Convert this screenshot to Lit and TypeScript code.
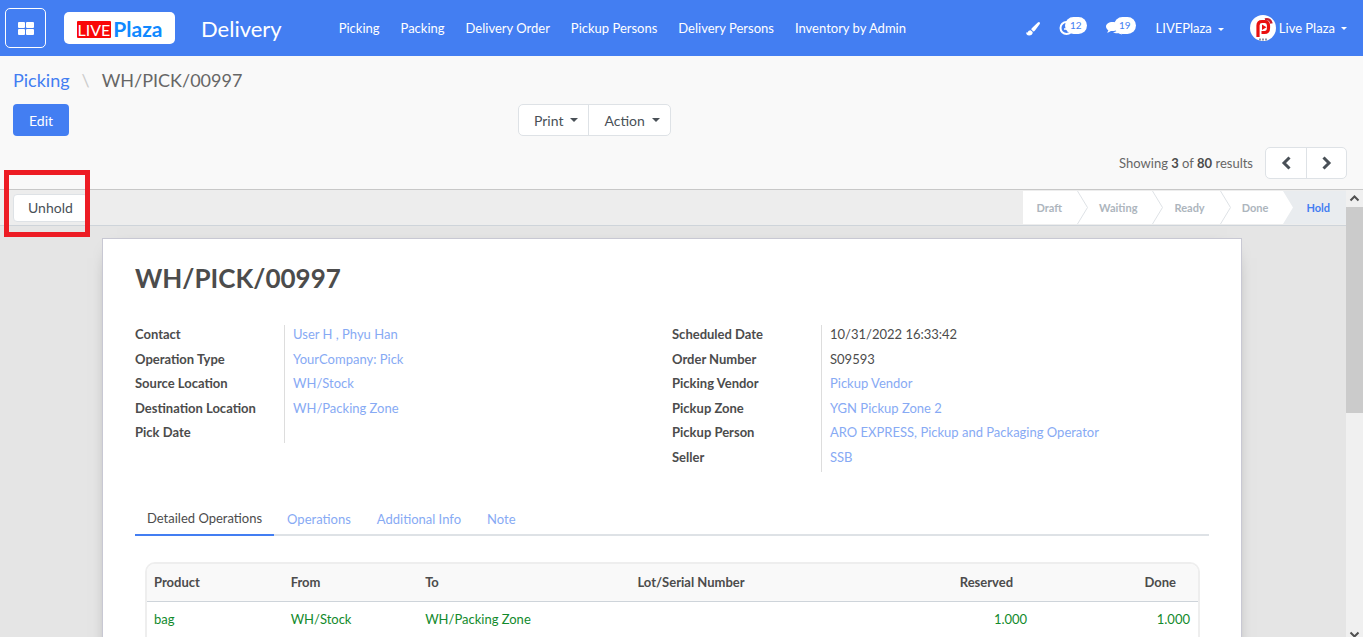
import { LitElement, html, css, svg, nothing } from "lit";
import { customElement } from "lit/decorators.js";
import { classMap } from "lit/directives/class-map.js";

interface Field {
  label: string;
  value: string;
  link?: boolean;
}

const MENU = ["Picking", "Packing", "Delivery Order", "Pickup Persons", "Delivery Persons", "Inventory by Admin"];
const STAGES = ["Draft", "Waiting", "Ready", "Done", "Hold"];
const TABS = ["Detailed Operations", "Operations", "Additional Info", "Note"];

const LEFT: Field[] = [
  { label: "Contact", value: "User H , Phyu Han", link: true },
  { label: "Operation Type", value: "YourCompany: Pick", link: true },
  { label: "Source Location", value: "WH/Stock", link: true },
  { label: "Destination Location", value: "WH/Packing Zone", link: true },
  { label: "Pick Date", value: "" },
];

const RIGHT: Field[] = [
  { label: "Scheduled Date", value: "10/31/2022 16:33:42" },
  { label: "Order Number", value: "S09593" },
  { label: "Picking Vendor", value: "Pickup Vendor", link: true },
  { label: "Pickup Zone", value: "YGN Pickup Zone 2", link: true },
  { label: "Pickup Person", value: "ARO EXPRESS, Pickup and Packaging Operator", link: true },
  { label: "Seller", value: "SSB", link: true },
];

const caret = html`<svg class="caret" viewBox="0 0 8 4" aria-hidden="true"><path d="M0 0h8L4 4z" fill="currentColor" /></svg>`;

@customElement("app-root")
export class AppRoot extends LitElement {
  static styles = css`
    :host {
      display: flex;
      flex-direction: column;
      height: 100vh;
      overflow: hidden;
      background: #f9f9f9;
      color: #4c4c4c;
      font-family: Lato, "Liberation Sans", sans-serif;
      font-size: 13px;
      line-height: 1.5;
    }
    * { box-sizing: border-box; }
    a { color: inherit; text-decoration: none; }
    button { font: inherit; color: inherit; background: none; border: 0; padding: 0; cursor: pointer; }
    svg { display: block; }
    .caret { display: inline-block; width: 8px; height: 4px; vertical-align: middle; }

    .navbar {
      flex: none;
      display: flex;
      align-items: center;
      height: 56px;
      padding: 0 16px 0 5px;
      background: #437ef2;
      color: #fff;
    }
    .apps {
      display: grid;
      place-items: center;
      width: 41px;
      height: 40px;
      border: 1px solid #fff;
      border-radius: 5px;
    }
    .apps svg { width: 16px; height: 14px; }
    .logo {
      display: flex;
      align-items: center;
      justify-content: center;
      gap: 2px;
      width: 111px;
      height: 32px;
      margin-left: 18px;
      padding-top: 2px;
      background: #fff;
      border-radius: 5px;
    }
    .live { padding: 0 1px; background: #f90808; color: #fff; font-size: 16px; line-height: 17px; border-radius: 1px; }
    .plaza { color: #1089ff; font-size: 21px; line-height: 20px; font-weight: 700; }
    .brand { margin-left: 26px; font-size: 22px; }
    .menu { display: flex; gap: 21px; margin-left: 57px; padding-top: 2px; }
    .systray { display: flex; align-items: center; margin-left: auto; }
    .brush { width: 14px; height: 14px; margin-top: 1px; }
    .tray { display: flex; align-items: center; position: relative; width: 28px; height: 20px; }
    .activity { margin-left: 19px; }
    .messages { width: 30px; margin-left: 19px; }
    .count {
      position: absolute;
      right: 0;
      top: -1px;
      padding: 0 5px;
      border-radius: 9px;
      background: #fff;
      color: #437ef2;
      font-size: 10px;
      line-height: 17px;
    }
    .drop { display: flex; align-items: center; gap: 6px; padding-top: 2px; }
    .drop .caret { width: 6px; height: 3px; }
    .company { margin-left: 20px; }
    .user { margin-left: 26px; padding-top: 0; }
    .name { padding-top: 2px; }
    .avatar { width: 26px; height: 26px; margin-right: -3px; }

    .panel { flex: none; padding: 11px 16px 10px 13px; border-bottom: 1px solid #c8c8c8; }
    .crumbs { display: flex; gap: 12px; font-size: 18px; line-height: 26px; color: #666; }
    .crumbs a { color: #437ef2; }
    .slash { color: #ccc; }
    .actions { display: grid; grid-template-columns: 505px 1fr; align-items: center; margin-top: 11px; }
    .edit { justify-self: start; height: 32px; padding: 0 16px; border-radius: 4px; background: #437ef2; color: #fff; font-size: 14px; }
    .group { display: flex; justify-self: start; border: 1px solid #dee2e6; border-radius: 5px; background: #fff; color: #495057; }
    .group button { display: flex; align-items: center; justify-content: center; gap: 7px; height: 30px; }
    .group button + button { border-left: 1px solid #dee2e6; }
    .menus button { padding: 0 10px 0 15px; font-size: 14px; }
    .pager { display: flex; align-items: center; justify-content: flex-end; gap: 12px; margin-top: 11px; color: #666; }
    .pager span { padding-top: 2px; }
    .pager b { color: #4c4c4c; }
    .pager button { width: 40px; }
    .pager button svg { width: 12px; height: 14px; }

    .body { flex: 1; min-height: 0; display: flex; }
    .form { flex: 1; min-width: 0; background: #e5e5e5; }
    .statusbar {
      display: flex;
      align-items: center;
      justify-content: space-between;
      height: 36px;
      padding-left: 13px;
      background: #ededed;
      border-bottom: 1px solid #ced4da;
    }
    .hold { position: relative; }
    .unhold { display: block; height: 28px; padding: 0 14px; border: 1px solid #dee2e6; border-radius: 4px; background: #fff; color: #495057; font-size: 14px; }
    .marker { position: absolute; inset: -24px -2px -15px -9px; border: 5px solid #ed1c24; pointer-events: none; }
    .stages { display: flex; height: 33px; margin: 0; padding: 0; list-style: none; background: #fff; font-size: 11px; font-weight: 700; color: #adb5bd; }
    .stage { display: flex; align-items: center; padding-left: 14px; }
    .stage span { padding-top: 2px; }
    .stage svg { width: 11px; height: 33px; margin-left: 15px; }
    .stage + .stage { padding-left: 11px; }
    .stage.current { padding: 0 16px 0 12px; background: #e9ecef; color: #437ef2; }

    .canvas { padding: 12px 2px 0 0; }
    .sheet {
      max-width: 1140px;
      min-height: 900px;
      margin: 0 auto;
      padding: 21px 32px;
      background: #fff;
      border: 1px solid #c8c8d3;
      box-shadow: 0 5px 20px -15px #000;
    }
    h1 { margin: 0; font-size: 26px; line-height: 36px; font-weight: 700; }
    .columns { display: grid; grid-template-columns: 1fr 1fr; margin-top: 29px; }
    .fields { display: grid; grid-template-columns: 149px 1fr; align-content: start; margin: 0; }
    dt { font-weight: 700; padding-bottom: 5px; }
    dd { margin: 0; padding: 0 0 5px 8px; border-left: 1px solid #ddd; }
    dd.empty { height: 20px; }
    .link { color: #87aaf4; }
    .tabs { display: flex; margin-top: 32px; border-bottom: 2px solid #dee2e6; }
    .tab { height: 32px; margin-bottom: -2px; padding: 1px 13px 0; color: #87aaf4; border-bottom: 2px solid transparent; }
    .tab.active { padding: 0 12px; color: #4c4c4c; border-bottom-color: #437ef2; }
    .list { margin: 26px 9px 0 10px; border: 2px solid #eee; border-radius: 10px 10px 0 0; overflow: hidden; }
    table { width: 100%; border-collapse: collapse; table-layout: fixed; }
    .c1 { width: 13%; }
    .c2 { width: 12.8%; }
    .c3 { width: 20.2%; }
    .c4 { width: 24%; }
    .c6 { width: 15.5%; }
    th { height: 37px; padding: 0 8px 0 7px; background: #f9f9f9; border-bottom: 1px solid #ced4da; text-align: left; }
    td { height: 36px; padding: 1px 8px 0 7px; border-bottom: 1px solid #eee; color: #128a2c; }
    .num { text-align: right; }
    th.num { padding-right: 22px; }

    .scrollbar { flex: none; display: flex; flex-direction: column; align-items: center; width: 17px; margin-bottom: -6px; background: #f0f0f0; }
    .scrollbar svg { width: 17px; height: 17px; }
    .thumb { width: 17px; height: 206px; margin-bottom: auto; background: #cbcbcb; }
  `;

  private fields(list: Field[]) {
    return html`<dl class="fields">
      ${list.map(
        (f) => html`<dt>${f.label}</dt>
          <dd class=${classMap({ empty: !f.value })}>${f.link ? html`<a class="link" href="#">${f.value}</a>` : f.value}</dd>`
      )}
    </dl>`;
  }

  private stage(name: string, i: number) {
    const beforeLast = i === STAGES.length - 2;
    const last = i === STAGES.length - 1;
    const edge = beforeLast
      ? svg`<path d="M0 0L10 16.500L0 33H11V0z" fill="#e9ecef"/>`
      : svg`<path d="M.5 0L10.500 16.500L.5 33" fill="none" stroke="#dee2e6"/>`;
    return html`<li class=${classMap({ stage: true, current: last })}>
      <span>${name}</span>${last ? nothing : html`<svg viewBox="0 0 11 33" aria-hidden="true">${edge}</svg>`}
    </li>`;
  }

  render() {
    return html`
      <header class="navbar">
        <button class="apps" aria-label="Applications">
          <svg viewBox="0 0 16 14" fill="#fff"><rect y="1" width="7" height="6" rx="1" /><rect x="8" y="1" width="8" height="6" rx="1" /><rect y="8" width="7" height="6" rx="1" /><rect x="8" y="8" width="8" height="6" rx="1" /></svg>
        </button>
        <a class="logo" href="#"><span class="live">LIVE</span><span class="plaza">Plaza</span></a>
        <a class="brand" href="#">Delivery</a>
        <nav class="menu">${MENU.map((m) => html`<a href="#">${m}</a>`)}</nav>
        <div class="systray">
          <button aria-label="Theme">
            <svg class="brush" viewBox="0 0 14 14" fill="#fff"><path d="M13.600.4c.6.500.4 1.200 0 1.800L9 8.600c-.5.6-1 .9-1.600.9L5.300 7.600c0-.6.2-1.100.7-1.600L11.800.6c.6-.5 1.300-.7 1.800-.2zM4.600 8.200l2.100 1.900c.1 2.300-1.500 3.500-3.600 3.500C1.200 13.600.2 12.300 0 10.300c.7.5 1.300.6 1.700 0 .5-1.300 1.500-2.100 2.900-2.100z" /></svg>
          </button>
          <button class="tray activity" aria-label="Activities">
            <svg width="15" height="15" viewBox="0 0 15 15" fill="none" stroke="#fff"><circle cx="7.500" cy="7" r="6" stroke-width="2" /><path d="M8 3.500V8H5" stroke-width="1.300" /></svg>
            <span class="count">12</span>
          </button>
          <button class="tray messages" aria-label="Messages">
            <svg width="17" height="14" viewBox="0 0 17 14" fill="#fff"><path d="M6.500 1C10 1 13 2.900 13 5.500S10 10 6.500 10c-.6 0-1.100 0-1.600-.1C3.800 10.800 2.500 11.400 1 11.500c.6-.6 1.100-1.200 1.300-2.300C.9 8.300 0 7 0 5.500 0 2.900 3 1 6.500 1z" /><path d="M14 5c1.800.8 3 2 3 3.500 0 1.200-.7 2.200-1.900 3 .2.700.6 1.300 1.100 1.900-1.400-.1-2.500-.6-3.400-1.200-2.300.4-4.500-.1-5.800-1.200C10.900 11 14 8.700 14 5z" /></svg>
            <span class="count">19</span>
          </button>
          <button class="drop company">LIVEPlaza ${caret}</button>
          <button class="drop user">
            <svg class="avatar" viewBox="0 0 26 26"><circle cx="13" cy="13" r="13" fill="#fff" /><path d="M8 22V10.500Q8 6.500 12 6.500H14.500Q18.500 6.500 18.500 10.500V13Q18.500 17.500 14.500 17.500H11.500" fill="none" stroke="#ea1010" stroke-width="3.200" /><path d="M12 9.500l4.500 2.800-4.500 2.800z" fill="#ea1010" /><path d="M15 4.500q5-1.500 6.500 4" fill="none" stroke="#c81e2c" stroke-width="2.600" /><path d="M9 24.500h8" stroke="#8d93a5" stroke-width="2" stroke-dasharray="2 1" /></svg>
            <span class="name">Live Plaza</span> ${caret}
          </button>
        </div>
      </header>

      <section class="panel">
        <nav class="crumbs"><a href="#">Picking</a><span class="slash">\\</span><span>WH/PICK/00997</span></nav>
        <div class="actions">
          <button class="edit">Edit</button>
          <div class="group menus"><button>Print ${caret}</button><button>Action ${caret}</button></div>
        </div>
        <div class="pager">
          <span>Showing <b>3</b> of <b>80</b> results</span>
          <div class="group">
            <button aria-label="Previous"><svg viewBox="0 0 12 14" fill="none" stroke="#495057" stroke-width="3"><path d="M9.500 1.500L4 7l5.500 5.500" /></svg></button>
            <button aria-label="Next"><svg viewBox="0 0 12 14" fill="none" stroke="#495057" stroke-width="3"><path d="M2.500 1.500L8 7l-5.500 5.500" /></svg></button>
          </div>
        </div>
      </section>

      <main class="body">
        <div class="form">
          <div class="statusbar">
            <div class="hold"><button class="unhold">Unhold</button><span class="marker"></span></div>
            <ol class="stages">${STAGES.map((s, i) => this.stage(s, i))}</ol>
          </div>
          <div class="canvas">
            <article class="sheet">
              <h1>WH/PICK/00997</h1>
              <div class="columns">${this.fields(LEFT)}${this.fields(RIGHT)}</div>
              <div class="tabs" role="tablist">
                ${TABS.map((t, i) => html`<button role="tab" aria-selected=${i === 0 ? "true" : "false"} class=${classMap({ tab: true, active: i === 0 })}>${t}</button>`)}
              </div>
              <div class="list">
                <table>
                  <colgroup><col class="c1" /><col class="c2" /><col class="c3" /><col class="c4" /><col /><col class="c6" /></colgroup>
                  <thead>
                    <tr><th>Product</th><th>From</th><th>To</th><th>Lot/Serial Number</th><th class="num">Reserved</th><th class="num">Done</th></tr>
                  </thead>
                  <tbody>
                    <tr><td>bag</td><td>WH/Stock</td><td>WH/Packing Zone</td><td></td><td class="num">1.000</td><td class="num">1.000</td></tr>
                  </tbody>
                </table>
              </div>
            </article>
          </div>
        </div>
        <div class="scrollbar" aria-hidden="true">
          <svg viewBox="0 0 17 17" fill="none" stroke="#505050" stroke-width="2"><path d="M4.500 10.500l4-4 4 4" /></svg>
          <div class="thumb"></div>
          <svg viewBox="0 0 17 17" fill="none" stroke="#505050" stroke-width="2"><path d="M4.500 6.500l4 4 4-4" /></svg>
        </div>
      </main>
    `;
  }
}
